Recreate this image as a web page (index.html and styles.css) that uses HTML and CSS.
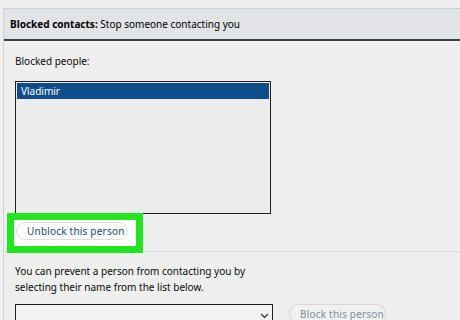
FILE: index.html
```html
<!DOCTYPE html>
<html lang="en">
<head>
    <meta charset="UTF-8">
    <title>Blocked contacts</title>
    <link rel="stylesheet" href="styles.css">
</head>
<body>
    <div class="panel">
        <div class="panel-header">
            <b>Blocked contacts:</b> Stop someone contacting you
        </div>

        <div class="panel-body">
            <p class="label">Blocked people:</p>
            <div class="listbox">
                <div class="list-item selected">Vladimir</div>
            </div>

            <div class="highlight">
                <button class="pill">Unblock this person</button>
            </div>

            <div class="block-section">
                <p class="hint">You can prevent a person from contacting you by<br>selecting their name from the list below.</p>
                <div class="block-row">
                    <div class="dropdown">
                        <svg class="chevron" width="9" height="6" viewBox="0 0 9 6">
                            <path d="M1 1 L4.5 4.5 L8 1" fill="none" stroke="#333" stroke-width="1.2"/>
                        </svg>
                    </div>
                    <button class="pill disabled">Block this person</button>
                </div>
            </div>
        </div>
    </div>
</body>
</html>
```

FILE: styles.css
```css
body {
    margin: 0;
    font-family: "Noto Sans", "Open Sans", sans-serif;
    font-size: 10px;
    color: #0a0a0a;
    background-color: #efefef;
}
.panel {
    margin: 8px 0 0 3px;
    border-left: 1px solid #d2d2d2;
}
.panel-header {
    height: 30px;
    line-height: 30px;
    padding-left: 6px;
    background-color: #e1e3e6;
    border-top: 1px solid #cfd1d4;
    border-bottom: 2px solid #3b4045;
    font-size: 10px;
    color: #000;
}
.panel-header b {
    font-weight: 700;
}
.panel-body {
    padding: 12px 0 0 11px;
}
.label {
    margin: 0;
    line-height: 16px;
}
.listbox {
    width: 254px;
    height: 131px;
    margin-top: 12px;
    border: 1px solid #1e1e1e;
    background-color: #ececec;
}
.list-item {
    height: 16px;
    line-height: 16px;
    padding-left: 4px;
    margin: 1px 1px 0 1px;
}
.selected {
    background-color: #0f4c8a;
    color: white;
}
.highlight {
    position: relative;
    display: flex;
    width: 122px;
    margin: -1px 0 0 -8px;
    padding: 2px 0 6px;
    border: 7px solid #22e41f;
    background-color: white;
}
.pill {
    font-family: inherit;
    font-size: 10px;
    letter-spacing: 0.2px;
    white-space: nowrap;
    height: 18px;
    padding: 0 10px;
    border: 1px solid #dedede;
    border-radius: 10px;
    background-color: white;
    color: #1b4a62;
}
.highlight .pill {
    margin-left: 2px;
    width: 112px;
}
.block-section {
    margin: -2px 0 0 -11px;
    padding: 11px 0 0 11px;
    border-top: 1px solid #dcdcdc;
}
.hint {
    margin: 0;
    line-height: 16px;
}
.block-row {
    display: flex;
    align-items: flex-start;
    gap: 16px;
    margin-top: 9px;
}
.dropdown {
    width: 253px;
    height: 22px;
    border: 1px solid #1e1e1e;
    background-color: #f2f2f2;
    display: flex;
    justify-content: flex-end;
    align-items: center;
    padding-right: 3px;
}
.disabled {
    width: 97px;
    background-color: #f1f1f1;
    border-color: #d6d6d6;
    color: #7f8e99;
    height: 19px;
}
```
